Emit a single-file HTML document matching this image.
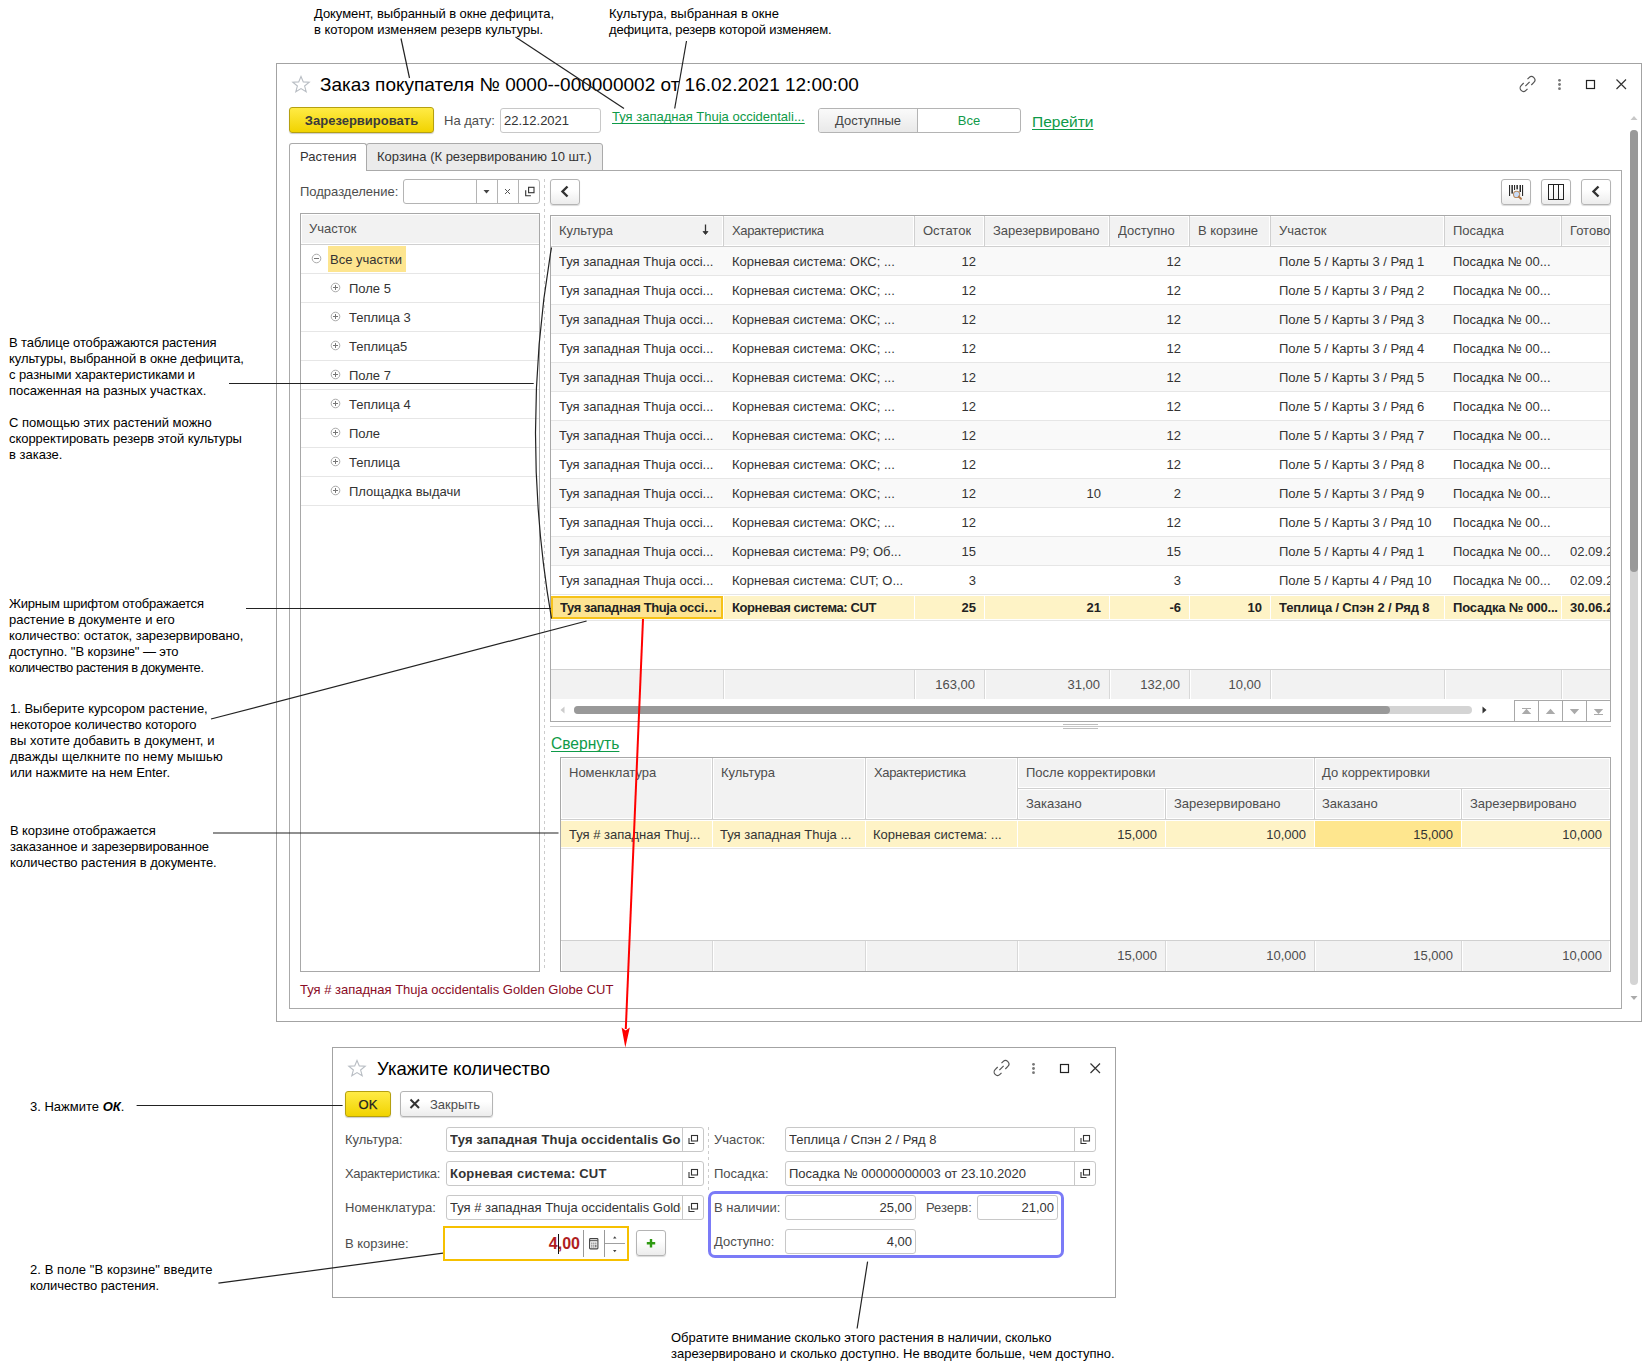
<!DOCTYPE html><html><head><meta charset="utf-8"><style>
html,body{margin:0;padding:0;}
body{width:1642px;height:1367px;position:relative;overflow:hidden;background:#fff;font-family:'Liberation Sans', sans-serif;}
div{box-sizing:border-box;}
.ann{position:absolute;font-size:13px;line-height:16px;color:#000;white-space:nowrap;}
.btn{position:absolute;border:1px solid #b4b4b4;border-radius:3px;background:linear-gradient(#fff 40%,#ececec);box-shadow:0 1px 1px rgba(0,0,0,.15);}
.ybtn{position:absolute;border:1px solid #b5a010;border-radius:3px;background:linear-gradient(#ffeb45,#f1d300);box-shadow:0 1px 1px rgba(0,0,0,.2);}
.fld{position:absolute;border:1px solid #c8c8c8;border-radius:3px;background:#fff;}
</style></head><body>
<div style="position:absolute;left:276px;top:63px;width:1366px;height:959px;border:1px solid #a3a3a3;background:#fff;"></div>
<svg style="position:absolute;left:291px;top:75px" width="20" height="18" viewBox="0 0 20 18"><path d="M10 1.5 L12.3 6.9 L18.2 7.2 L13.6 11 L15.2 16.7 L10 13.6 L4.8 16.7 L6.4 11 L1.8 7.2 L7.7 6.9 Z" fill="none" stroke="#b9bec4" stroke-width="1.1"/></svg>
<div style="position:absolute;left:320px;top:75px;line-height:20px;font-size:19px;color:#000;font-weight:normal;white-space:nowrap;text-align:left;">Заказ покупателя № 0000--000000002 от 16.02.2021 12:00:00</div>
<svg style="position:absolute;left:1515px;top:72px" width="120" height="24" viewBox="0 0 120 24">
<g fill="none" stroke="#555" stroke-width="1.2" transform="rotate(-45 12.5 12)">
<path d="M10.5 8.6 h-3.6 a3.4 3.4 0 0 0 0 6.8 h2.2"/>
<path d="M14.5 15.4 h3.6 a3.4 3.4 0 0 0 0 -6.8 h-2.2"/>
<path d="M9.5 12 h6"/>
</g>
<g fill="#777"><circle cx="44.5" cy="8.3" r="1.4"/><circle cx="44.5" cy="12.5" r="1.4"/><circle cx="44.5" cy="16.7" r="1.4"/></g>
<rect x="71.5" y="8.5" width="8" height="8" fill="none" stroke="#222" stroke-width="1.2"/>
<path d="M101.5 7.5 l9.5 9.5 M111 7.5 l-9.5 9.5" stroke="#333" stroke-width="1.2"/>
</svg>
<div class="ybtn" style="left:289px;top:107px;width:145px;height:26px;"></div>
<div style="position:absolute;left:289px;top:111px;width:145px;line-height:20px;font-size:13px;color:#3a3a3a;font-weight:bold;white-space:nowrap;text-align:center;">Зарезервировать</div>
<div style="position:absolute;left:444px;top:111px;line-height:20px;font-size:13px;color:#4d4d4d;font-weight:normal;white-space:nowrap;text-align:left;">На дату:</div>
<div class="fld" style="left:500px;top:108px;width:101px;height:25px;"></div>
<div style="position:absolute;left:504px;top:111px;line-height:20px;font-size:13px;color:#333;font-weight:normal;white-space:nowrap;text-align:left;">22.12.2021</div>
<div style="position:absolute;left:612px;top:107px;line-height:20px;font-size:13px;color:#0e9a48;font-weight:normal;white-space:nowrap;text-align:left;"><u style="text-decoration-thickness:1px;text-underline-offset:2px;text-decoration-skip-ink:none">Туя западная Thuja occidentali...</u></div>
<div style="position:absolute;left:818px;top:108px;width:203px;height:25px;border:1px solid #b4b4b4;border-radius:3px;background:#fff;overflow:hidden"><div style="position:absolute;left:0;top:0;width:99px;height:23px;background:linear-gradient(#fafafa,#e9e9e9);border-right:1px solid #b4b4b4"></div></div>
<div style="position:absolute;left:818px;top:111px;width:100px;line-height:20px;font-size:13px;color:#444;font-weight:normal;white-space:nowrap;text-align:center;">Доступные</div>
<div style="position:absolute;left:918px;top:111px;width:102px;line-height:20px;font-size:13px;color:#119a4a;font-weight:normal;white-space:nowrap;text-align:center;">Все</div>
<div style="position:absolute;left:1032px;top:112px;line-height:20px;font-size:15.5px;color:#0e9a48;font-weight:normal;white-space:nowrap;text-align:left;"><u style="text-decoration-thickness:1px;text-underline-offset:2px;text-decoration-skip-ink:none">Перейти</u></div>
<div style="position:absolute;left:366px;top:143px;width:237px;height:28px;border:1px solid #aaa;border-radius:3px 3px 0 0;background:#ebebeb"></div>
<div style="position:absolute;left:289px;top:170px;width:1333px;height:839px;border:1px solid #aaa;border-top:1px solid #aaa;"></div>
<div style="position:absolute;left:289px;top:143px;width:78px;height:28px;border:1px solid #aaa;border-bottom:none;border-radius:3px 3px 0 0;background:#fff"></div><div style="position:absolute;left:290px;top:170px;width:76px;height:1px;background:#fff"></div>
<div style="position:absolute;left:300px;top:147px;line-height:20px;font-size:13px;color:#333;font-weight:normal;white-space:nowrap;text-align:left;">Растения</div>
<div style="position:absolute;left:377px;top:147px;line-height:20px;font-size:13px;color:#333;font-weight:normal;white-space:nowrap;text-align:left;">Корзина (К резервированию 10 шт.)</div>
<div style="position:absolute;left:300px;top:182px;line-height:20px;font-size:13px;color:#4d4d4d;font-weight:normal;white-space:nowrap;text-align:left;">Подразделение:</div>
<div class="fld" style="left:403px;top:179px;width:137px;height:25px;border-color:#b4b4b4"></div>
<div style="position:absolute;left:476px;top:180px;width:1px;height:23px;background:#b4b4b4"></div>
<div style="position:absolute;left:497px;top:180px;width:1px;height:23px;background:#b4b4b4"></div>
<div style="position:absolute;left:518px;top:180px;width:1px;height:23px;background:#b4b4b4"></div>
<svg style="position:absolute;left:476px;top:180px" width="63" height="23" viewBox="0 0 63 23">
<path d="M7.5 10 h6 l-3 3.5z" fill="#444"/>
<path d="M29 9 l5 5 M34 9 l-5 5" stroke="#555" stroke-width="1"/>
<path d="M49.7 10.2 v5.6 h5.2" fill="none" stroke="#333" stroke-width="1.1"/>
<rect x="52.6" y="7.3" width="5.4" height="5.4" fill="none" stroke="#333" stroke-width="1.1"/>
</svg>
<div style="position:absolute;left:544px;top:179px;width:1px;height:792px;background:repeating-linear-gradient(#ccc 0 3px,transparent 3px 6px)"></div>
<div class="btn" style="left:550px;top:179px;width:30px;height:26px;"></div>
<svg style="position:absolute;left:558px;top:184px" width="14" height="16" viewBox="0 0 14 16"><path d="M9.5 2.5 L4.5 7.5 L9.5 12.5" fill="none" stroke="#333" stroke-width="2.4"/></svg>
<div class="btn" style="left:1501px;top:179px;width:30px;height:26px;"></div>
<div class="btn" style="left:1541px;top:179px;width:30px;height:26px;"></div>
<div class="btn" style="left:1581px;top:179px;width:30px;height:26px;"></div>
<svg style="position:absolute;left:1498px;top:176px" width="36" height="32" viewBox="0 0 36 32">
<g fill="#2a2a2a"><rect x="11" y="9" width="1.1" height="11"/><rect x="13.4" y="9" width="1.5" height="8.6"/><rect x="16" y="9" width="1.1" height="5"/>
<rect x="18.4" y="9" width="1.5" height="4.4"/><rect x="21.5" y="9" width="1.5" height="7"/><rect x="24" y="9" width="1.1" height="11"/></g>
<circle cx="18.6" cy="18.4" r="3.1" fill="#c9dcf7" stroke="#b98c62" stroke-width="1.1"/>
<path d="M20.8 20.6 L23 22.8" stroke="#b07a4e" stroke-width="2" stroke-linecap="round"/>
</svg>
<svg style="position:absolute;left:1541px;top:179px" width="30" height="26" viewBox="0 0 30 26">
<rect x="7.5" y="5.5" width="15" height="15" fill="none" stroke="#222" stroke-width="1"/>
<path d="M12.5 5.5 v15 M17.5 5.5 v15" stroke="#222" stroke-width="1"/>
</svg>
<svg style="position:absolute;left:1589px;top:184px" width="14" height="16" viewBox="0 0 14 16"><path d="M9.5 2.5 L4.5 7.5 L9.5 12.5" fill="none" stroke="#333" stroke-width="2.4"/></svg>
<div style="position:absolute;left:300px;top:213px;width:240px;height:759px;border:1px solid #a8a8a8;background:#fff"></div>
<div style="position:absolute;left:301px;top:214px;width:238px;height:30px;background:#f2f2f2;border:1px solid #fff;border-right:none"></div>
<div style="position:absolute;left:301px;top:244px;width:238px;height:1px;background:#d0d0d0"></div>
<div style="position:absolute;left:309px;top:219px;line-height:20px;font-size:13px;color:#4d4d4d;font-weight:normal;white-space:nowrap;text-align:left;">Участок</div>
<div style="position:absolute;left:301px;top:273px;width:238px;height:1px;background:#e6e6e6"></div>
<div style="position:absolute;left:328px;top:246px;width:78px;height:26px;background:#fde58f"></div>
<svg style="position:absolute;left:311px;top:253px" width="12" height="12" viewBox="0 0 12 12"><circle cx="5.5" cy="5.5" r="4.3" fill="none" stroke="#aaa" stroke-width="1"/><path d="M3 5.5 h5" stroke="#777" stroke-width="1"/></svg>
<div style="position:absolute;left:330px;top:250px;line-height:20px;font-size:13px;color:#333;font-weight:normal;white-space:nowrap;text-align:left;">Все участки</div>
<div style="position:absolute;left:301px;top:302px;width:238px;height:1px;background:#e6e6e6"></div>
<svg style="position:absolute;left:330px;top:282px" width="12" height="12" viewBox="0 0 12 12"><circle cx="5.5" cy="5.5" r="4.3" fill="none" stroke="#aaa" stroke-width="1"/><path d="M3 5.5 h5 M5.5 3 v5" stroke="#777" stroke-width="1"/></svg>
<div style="position:absolute;left:349px;top:279px;line-height:20px;font-size:13px;color:#333;font-weight:normal;white-space:nowrap;text-align:left;">Поле 5</div>
<div style="position:absolute;left:301px;top:331px;width:238px;height:1px;background:#e6e6e6"></div>
<svg style="position:absolute;left:330px;top:311px" width="12" height="12" viewBox="0 0 12 12"><circle cx="5.5" cy="5.5" r="4.3" fill="none" stroke="#aaa" stroke-width="1"/><path d="M3 5.5 h5 M5.5 3 v5" stroke="#777" stroke-width="1"/></svg>
<div style="position:absolute;left:349px;top:308px;line-height:20px;font-size:13px;color:#333;font-weight:normal;white-space:nowrap;text-align:left;">Теплица 3</div>
<div style="position:absolute;left:301px;top:360px;width:238px;height:1px;background:#e6e6e6"></div>
<svg style="position:absolute;left:330px;top:340px" width="12" height="12" viewBox="0 0 12 12"><circle cx="5.5" cy="5.5" r="4.3" fill="none" stroke="#aaa" stroke-width="1"/><path d="M3 5.5 h5 M5.5 3 v5" stroke="#777" stroke-width="1"/></svg>
<div style="position:absolute;left:349px;top:337px;line-height:20px;font-size:13px;color:#333;font-weight:normal;white-space:nowrap;text-align:left;">Теплица5</div>
<div style="position:absolute;left:301px;top:389px;width:238px;height:1px;background:#e6e6e6"></div>
<svg style="position:absolute;left:330px;top:369px" width="12" height="12" viewBox="0 0 12 12"><circle cx="5.5" cy="5.5" r="4.3" fill="none" stroke="#aaa" stroke-width="1"/><path d="M3 5.5 h5 M5.5 3 v5" stroke="#777" stroke-width="1"/></svg>
<div style="position:absolute;left:349px;top:366px;line-height:20px;font-size:13px;color:#333;font-weight:normal;white-space:nowrap;text-align:left;">Поле 7</div>
<div style="position:absolute;left:301px;top:418px;width:238px;height:1px;background:#e6e6e6"></div>
<svg style="position:absolute;left:330px;top:398px" width="12" height="12" viewBox="0 0 12 12"><circle cx="5.5" cy="5.5" r="4.3" fill="none" stroke="#aaa" stroke-width="1"/><path d="M3 5.5 h5 M5.5 3 v5" stroke="#777" stroke-width="1"/></svg>
<div style="position:absolute;left:349px;top:395px;line-height:20px;font-size:13px;color:#333;font-weight:normal;white-space:nowrap;text-align:left;">Теплица 4</div>
<div style="position:absolute;left:301px;top:447px;width:238px;height:1px;background:#e6e6e6"></div>
<svg style="position:absolute;left:330px;top:427px" width="12" height="12" viewBox="0 0 12 12"><circle cx="5.5" cy="5.5" r="4.3" fill="none" stroke="#aaa" stroke-width="1"/><path d="M3 5.5 h5 M5.5 3 v5" stroke="#777" stroke-width="1"/></svg>
<div style="position:absolute;left:349px;top:424px;line-height:20px;font-size:13px;color:#333;font-weight:normal;white-space:nowrap;text-align:left;">Поле</div>
<div style="position:absolute;left:301px;top:476px;width:238px;height:1px;background:#e6e6e6"></div>
<svg style="position:absolute;left:330px;top:456px" width="12" height="12" viewBox="0 0 12 12"><circle cx="5.5" cy="5.5" r="4.3" fill="none" stroke="#aaa" stroke-width="1"/><path d="M3 5.5 h5 M5.5 3 v5" stroke="#777" stroke-width="1"/></svg>
<div style="position:absolute;left:349px;top:453px;line-height:20px;font-size:13px;color:#333;font-weight:normal;white-space:nowrap;text-align:left;">Теплица</div>
<div style="position:absolute;left:301px;top:505px;width:238px;height:1px;background:#e6e6e6"></div>
<svg style="position:absolute;left:330px;top:485px" width="12" height="12" viewBox="0 0 12 12"><circle cx="5.5" cy="5.5" r="4.3" fill="none" stroke="#aaa" stroke-width="1"/><path d="M3 5.5 h5 M5.5 3 v5" stroke="#777" stroke-width="1"/></svg>
<div style="position:absolute;left:349px;top:482px;line-height:20px;font-size:13px;color:#333;font-weight:normal;white-space:nowrap;text-align:left;">Площадка выдачи</div>
<div style="position:absolute;left:550px;top:215px;width:1061px;height:507px;border:1px solid #a8a8a8;background:#fff;overflow:hidden"></div>
<div style="position:absolute;left:551px;top:216px;width:1059px;height:30px;background:#f2f2f2"></div>
<div style="position:absolute;left:551px;top:246px;width:1059px;height:1px;background:#cfcfcf"></div>
<div style="position:absolute;left:551px;top:216px;width:172px;height:30px;border:1px solid #fff"></div>
<div style="position:absolute;left:559px;top:221px;line-height:20px;font-size:13px;color:#4d4d4d;font-weight:normal;white-space:nowrap;text-align:left;overflow:hidden">Культура</div>
<div style="position:absolute;left:723px;top:216px;width:191px;height:30px;border:1px solid #fff"></div>
<div style="position:absolute;left:723px;top:216px;width:1px;height:30px;background:#d0d0d0"></div>
<div style="position:absolute;left:732px;top:221px;line-height:20px;font-size:13px;color:#4d4d4d;font-weight:normal;white-space:nowrap;text-align:left;overflow:hidden"><span style="letter-spacing:-0.35px">Характеристика</span></div>
<div style="position:absolute;left:914px;top:216px;width:70px;height:30px;border:1px solid #fff"></div>
<div style="position:absolute;left:914px;top:216px;width:1px;height:30px;background:#d0d0d0"></div>
<div style="position:absolute;left:923px;top:221px;line-height:20px;font-size:13px;color:#4d4d4d;font-weight:normal;white-space:nowrap;text-align:left;overflow:hidden">Остаток</div>
<div style="position:absolute;left:984px;top:216px;width:125px;height:30px;border:1px solid #fff"></div>
<div style="position:absolute;left:984px;top:216px;width:1px;height:30px;background:#d0d0d0"></div>
<div style="position:absolute;left:993px;top:221px;line-height:20px;font-size:13px;color:#4d4d4d;font-weight:normal;white-space:nowrap;text-align:left;overflow:hidden">Зарезервировано</div>
<div style="position:absolute;left:1109px;top:216px;width:80px;height:30px;border:1px solid #fff"></div>
<div style="position:absolute;left:1109px;top:216px;width:1px;height:30px;background:#d0d0d0"></div>
<div style="position:absolute;left:1118px;top:221px;line-height:20px;font-size:13px;color:#4d4d4d;font-weight:normal;white-space:nowrap;text-align:left;overflow:hidden">Доступно</div>
<div style="position:absolute;left:1189px;top:216px;width:81px;height:30px;border:1px solid #fff"></div>
<div style="position:absolute;left:1189px;top:216px;width:1px;height:30px;background:#d0d0d0"></div>
<div style="position:absolute;left:1198px;top:221px;line-height:20px;font-size:13px;color:#4d4d4d;font-weight:normal;white-space:nowrap;text-align:left;overflow:hidden">В корзине</div>
<div style="position:absolute;left:1270px;top:216px;width:174px;height:30px;border:1px solid #fff"></div>
<div style="position:absolute;left:1270px;top:216px;width:1px;height:30px;background:#d0d0d0"></div>
<div style="position:absolute;left:1279px;top:221px;line-height:20px;font-size:13px;color:#4d4d4d;font-weight:normal;white-space:nowrap;text-align:left;overflow:hidden">Участок</div>
<div style="position:absolute;left:1444px;top:216px;width:117px;height:30px;border:1px solid #fff"></div>
<div style="position:absolute;left:1444px;top:216px;width:1px;height:30px;background:#d0d0d0"></div>
<div style="position:absolute;left:1453px;top:221px;line-height:20px;font-size:13px;color:#4d4d4d;font-weight:normal;white-space:nowrap;text-align:left;overflow:hidden">Посадка</div>
<div style="position:absolute;left:1561px;top:216px;width:49px;height:30px;border:1px solid #fff"></div>
<div style="position:absolute;left:1561px;top:216px;width:1px;height:30px;background:#d0d0d0"></div>
<div style="position:absolute;left:1570px;top:221px;line-height:20px;font-size:13px;color:#4d4d4d;font-weight:normal;white-space:nowrap;text-align:left;overflow:hidden">Готово</div>
<svg style="position:absolute;left:701px;top:224px" width="10" height="12" viewBox="0 0 10 12"><path d="M4.5 0.5 v9.5" stroke="#333" stroke-width="1.3"/><path d="M2 7.5 l2.5 3 l2.5 -3z" fill="#333" stroke="#333" stroke-width="0.8"/></svg>
<div style="position:absolute;left:551px;top:247px;width:1059px;height:28px;background:#f9f9f9"></div>
<div style="position:absolute;left:551px;top:275px;width:1059px;height:1px;background:#e6e6e6"></div>
<div style="position:absolute;left:559px;top:252px;line-height:20px;font-size:13px;color:#333;font-weight:normal;white-space:nowrap;text-align:left;width:163px;overflow:hidden">Туя западная Thuja occi...</div>
<div style="position:absolute;left:732px;top:252px;line-height:20px;font-size:13px;color:#333;font-weight:normal;white-space:nowrap;text-align:left;width:182px;overflow:hidden">Корневая система: ОКС; ...</div>
<div style="position:absolute;left:914px;top:252px;width:62px;line-height:20px;font-size:13px;color:#333;font-weight:normal;white-space:nowrap;text-align:right;">12</div>
<div style="position:absolute;left:1109px;top:252px;width:72px;line-height:20px;font-size:13px;color:#333;font-weight:normal;white-space:nowrap;text-align:right;">12</div>
<div style="position:absolute;left:1279px;top:252px;line-height:20px;font-size:13px;color:#333;font-weight:normal;white-space:nowrap;text-align:left;width:165px;overflow:hidden">Поле 5 / Карты 3 / Ряд 1</div>
<div style="position:absolute;left:1453px;top:252px;line-height:20px;font-size:13px;color:#333;font-weight:normal;white-space:nowrap;text-align:left;width:108px;overflow:hidden">Посадка № 00...</div>
<div style="position:absolute;left:551px;top:276px;width:1059px;height:28px;background:#fff"></div>
<div style="position:absolute;left:551px;top:304px;width:1059px;height:1px;background:#e6e6e6"></div>
<div style="position:absolute;left:559px;top:281px;line-height:20px;font-size:13px;color:#333;font-weight:normal;white-space:nowrap;text-align:left;width:163px;overflow:hidden">Туя западная Thuja occi...</div>
<div style="position:absolute;left:732px;top:281px;line-height:20px;font-size:13px;color:#333;font-weight:normal;white-space:nowrap;text-align:left;width:182px;overflow:hidden">Корневая система: ОКС; ...</div>
<div style="position:absolute;left:914px;top:281px;width:62px;line-height:20px;font-size:13px;color:#333;font-weight:normal;white-space:nowrap;text-align:right;">12</div>
<div style="position:absolute;left:1109px;top:281px;width:72px;line-height:20px;font-size:13px;color:#333;font-weight:normal;white-space:nowrap;text-align:right;">12</div>
<div style="position:absolute;left:1279px;top:281px;line-height:20px;font-size:13px;color:#333;font-weight:normal;white-space:nowrap;text-align:left;width:165px;overflow:hidden">Поле 5 / Карты 3 / Ряд 2</div>
<div style="position:absolute;left:1453px;top:281px;line-height:20px;font-size:13px;color:#333;font-weight:normal;white-space:nowrap;text-align:left;width:108px;overflow:hidden">Посадка № 00...</div>
<div style="position:absolute;left:551px;top:305px;width:1059px;height:28px;background:#f9f9f9"></div>
<div style="position:absolute;left:551px;top:333px;width:1059px;height:1px;background:#e6e6e6"></div>
<div style="position:absolute;left:559px;top:310px;line-height:20px;font-size:13px;color:#333;font-weight:normal;white-space:nowrap;text-align:left;width:163px;overflow:hidden">Туя западная Thuja occi...</div>
<div style="position:absolute;left:732px;top:310px;line-height:20px;font-size:13px;color:#333;font-weight:normal;white-space:nowrap;text-align:left;width:182px;overflow:hidden">Корневая система: ОКС; ...</div>
<div style="position:absolute;left:914px;top:310px;width:62px;line-height:20px;font-size:13px;color:#333;font-weight:normal;white-space:nowrap;text-align:right;">12</div>
<div style="position:absolute;left:1109px;top:310px;width:72px;line-height:20px;font-size:13px;color:#333;font-weight:normal;white-space:nowrap;text-align:right;">12</div>
<div style="position:absolute;left:1279px;top:310px;line-height:20px;font-size:13px;color:#333;font-weight:normal;white-space:nowrap;text-align:left;width:165px;overflow:hidden">Поле 5 / Карты 3 / Ряд 3</div>
<div style="position:absolute;left:1453px;top:310px;line-height:20px;font-size:13px;color:#333;font-weight:normal;white-space:nowrap;text-align:left;width:108px;overflow:hidden">Посадка № 00...</div>
<div style="position:absolute;left:551px;top:334px;width:1059px;height:28px;background:#fff"></div>
<div style="position:absolute;left:551px;top:362px;width:1059px;height:1px;background:#e6e6e6"></div>
<div style="position:absolute;left:559px;top:339px;line-height:20px;font-size:13px;color:#333;font-weight:normal;white-space:nowrap;text-align:left;width:163px;overflow:hidden">Туя западная Thuja occi...</div>
<div style="position:absolute;left:732px;top:339px;line-height:20px;font-size:13px;color:#333;font-weight:normal;white-space:nowrap;text-align:left;width:182px;overflow:hidden">Корневая система: ОКС; ...</div>
<div style="position:absolute;left:914px;top:339px;width:62px;line-height:20px;font-size:13px;color:#333;font-weight:normal;white-space:nowrap;text-align:right;">12</div>
<div style="position:absolute;left:1109px;top:339px;width:72px;line-height:20px;font-size:13px;color:#333;font-weight:normal;white-space:nowrap;text-align:right;">12</div>
<div style="position:absolute;left:1279px;top:339px;line-height:20px;font-size:13px;color:#333;font-weight:normal;white-space:nowrap;text-align:left;width:165px;overflow:hidden">Поле 5 / Карты 3 / Ряд 4</div>
<div style="position:absolute;left:1453px;top:339px;line-height:20px;font-size:13px;color:#333;font-weight:normal;white-space:nowrap;text-align:left;width:108px;overflow:hidden">Посадка № 00...</div>
<div style="position:absolute;left:551px;top:363px;width:1059px;height:28px;background:#f9f9f9"></div>
<div style="position:absolute;left:551px;top:391px;width:1059px;height:1px;background:#e6e6e6"></div>
<div style="position:absolute;left:559px;top:368px;line-height:20px;font-size:13px;color:#333;font-weight:normal;white-space:nowrap;text-align:left;width:163px;overflow:hidden">Туя западная Thuja occi...</div>
<div style="position:absolute;left:732px;top:368px;line-height:20px;font-size:13px;color:#333;font-weight:normal;white-space:nowrap;text-align:left;width:182px;overflow:hidden">Корневая система: ОКС; ...</div>
<div style="position:absolute;left:914px;top:368px;width:62px;line-height:20px;font-size:13px;color:#333;font-weight:normal;white-space:nowrap;text-align:right;">12</div>
<div style="position:absolute;left:1109px;top:368px;width:72px;line-height:20px;font-size:13px;color:#333;font-weight:normal;white-space:nowrap;text-align:right;">12</div>
<div style="position:absolute;left:1279px;top:368px;line-height:20px;font-size:13px;color:#333;font-weight:normal;white-space:nowrap;text-align:left;width:165px;overflow:hidden">Поле 5 / Карты 3 / Ряд 5</div>
<div style="position:absolute;left:1453px;top:368px;line-height:20px;font-size:13px;color:#333;font-weight:normal;white-space:nowrap;text-align:left;width:108px;overflow:hidden">Посадка № 00...</div>
<div style="position:absolute;left:551px;top:392px;width:1059px;height:28px;background:#fff"></div>
<div style="position:absolute;left:551px;top:420px;width:1059px;height:1px;background:#e6e6e6"></div>
<div style="position:absolute;left:559px;top:397px;line-height:20px;font-size:13px;color:#333;font-weight:normal;white-space:nowrap;text-align:left;width:163px;overflow:hidden">Туя западная Thuja occi...</div>
<div style="position:absolute;left:732px;top:397px;line-height:20px;font-size:13px;color:#333;font-weight:normal;white-space:nowrap;text-align:left;width:182px;overflow:hidden">Корневая система: ОКС; ...</div>
<div style="position:absolute;left:914px;top:397px;width:62px;line-height:20px;font-size:13px;color:#333;font-weight:normal;white-space:nowrap;text-align:right;">12</div>
<div style="position:absolute;left:1109px;top:397px;width:72px;line-height:20px;font-size:13px;color:#333;font-weight:normal;white-space:nowrap;text-align:right;">12</div>
<div style="position:absolute;left:1279px;top:397px;line-height:20px;font-size:13px;color:#333;font-weight:normal;white-space:nowrap;text-align:left;width:165px;overflow:hidden">Поле 5 / Карты 3 / Ряд 6</div>
<div style="position:absolute;left:1453px;top:397px;line-height:20px;font-size:13px;color:#333;font-weight:normal;white-space:nowrap;text-align:left;width:108px;overflow:hidden">Посадка № 00...</div>
<div style="position:absolute;left:551px;top:421px;width:1059px;height:28px;background:#f9f9f9"></div>
<div style="position:absolute;left:551px;top:449px;width:1059px;height:1px;background:#e6e6e6"></div>
<div style="position:absolute;left:559px;top:426px;line-height:20px;font-size:13px;color:#333;font-weight:normal;white-space:nowrap;text-align:left;width:163px;overflow:hidden">Туя западная Thuja occi...</div>
<div style="position:absolute;left:732px;top:426px;line-height:20px;font-size:13px;color:#333;font-weight:normal;white-space:nowrap;text-align:left;width:182px;overflow:hidden">Корневая система: ОКС; ...</div>
<div style="position:absolute;left:914px;top:426px;width:62px;line-height:20px;font-size:13px;color:#333;font-weight:normal;white-space:nowrap;text-align:right;">12</div>
<div style="position:absolute;left:1109px;top:426px;width:72px;line-height:20px;font-size:13px;color:#333;font-weight:normal;white-space:nowrap;text-align:right;">12</div>
<div style="position:absolute;left:1279px;top:426px;line-height:20px;font-size:13px;color:#333;font-weight:normal;white-space:nowrap;text-align:left;width:165px;overflow:hidden">Поле 5 / Карты 3 / Ряд 7</div>
<div style="position:absolute;left:1453px;top:426px;line-height:20px;font-size:13px;color:#333;font-weight:normal;white-space:nowrap;text-align:left;width:108px;overflow:hidden">Посадка № 00...</div>
<div style="position:absolute;left:551px;top:450px;width:1059px;height:28px;background:#fff"></div>
<div style="position:absolute;left:551px;top:478px;width:1059px;height:1px;background:#e6e6e6"></div>
<div style="position:absolute;left:559px;top:455px;line-height:20px;font-size:13px;color:#333;font-weight:normal;white-space:nowrap;text-align:left;width:163px;overflow:hidden">Туя западная Thuja occi...</div>
<div style="position:absolute;left:732px;top:455px;line-height:20px;font-size:13px;color:#333;font-weight:normal;white-space:nowrap;text-align:left;width:182px;overflow:hidden">Корневая система: ОКС; ...</div>
<div style="position:absolute;left:914px;top:455px;width:62px;line-height:20px;font-size:13px;color:#333;font-weight:normal;white-space:nowrap;text-align:right;">12</div>
<div style="position:absolute;left:1109px;top:455px;width:72px;line-height:20px;font-size:13px;color:#333;font-weight:normal;white-space:nowrap;text-align:right;">12</div>
<div style="position:absolute;left:1279px;top:455px;line-height:20px;font-size:13px;color:#333;font-weight:normal;white-space:nowrap;text-align:left;width:165px;overflow:hidden">Поле 5 / Карты 3 / Ряд 8</div>
<div style="position:absolute;left:1453px;top:455px;line-height:20px;font-size:13px;color:#333;font-weight:normal;white-space:nowrap;text-align:left;width:108px;overflow:hidden">Посадка № 00...</div>
<div style="position:absolute;left:551px;top:479px;width:1059px;height:28px;background:#f9f9f9"></div>
<div style="position:absolute;left:551px;top:507px;width:1059px;height:1px;background:#e6e6e6"></div>
<div style="position:absolute;left:559px;top:484px;line-height:20px;font-size:13px;color:#333;font-weight:normal;white-space:nowrap;text-align:left;width:163px;overflow:hidden">Туя западная Thuja occi...</div>
<div style="position:absolute;left:732px;top:484px;line-height:20px;font-size:13px;color:#333;font-weight:normal;white-space:nowrap;text-align:left;width:182px;overflow:hidden">Корневая система: ОКС; ...</div>
<div style="position:absolute;left:914px;top:484px;width:62px;line-height:20px;font-size:13px;color:#333;font-weight:normal;white-space:nowrap;text-align:right;">12</div>
<div style="position:absolute;left:984px;top:484px;width:117px;line-height:20px;font-size:13px;color:#333;font-weight:normal;white-space:nowrap;text-align:right;">10</div>
<div style="position:absolute;left:1109px;top:484px;width:72px;line-height:20px;font-size:13px;color:#333;font-weight:normal;white-space:nowrap;text-align:right;">2</div>
<div style="position:absolute;left:1279px;top:484px;line-height:20px;font-size:13px;color:#333;font-weight:normal;white-space:nowrap;text-align:left;width:165px;overflow:hidden">Поле 5 / Карты 3 / Ряд 9</div>
<div style="position:absolute;left:1453px;top:484px;line-height:20px;font-size:13px;color:#333;font-weight:normal;white-space:nowrap;text-align:left;width:108px;overflow:hidden">Посадка № 00...</div>
<div style="position:absolute;left:551px;top:508px;width:1059px;height:28px;background:#fff"></div>
<div style="position:absolute;left:551px;top:536px;width:1059px;height:1px;background:#e6e6e6"></div>
<div style="position:absolute;left:559px;top:513px;line-height:20px;font-size:13px;color:#333;font-weight:normal;white-space:nowrap;text-align:left;width:163px;overflow:hidden">Туя западная Thuja occi...</div>
<div style="position:absolute;left:732px;top:513px;line-height:20px;font-size:13px;color:#333;font-weight:normal;white-space:nowrap;text-align:left;width:182px;overflow:hidden">Корневая система: ОКС; ...</div>
<div style="position:absolute;left:914px;top:513px;width:62px;line-height:20px;font-size:13px;color:#333;font-weight:normal;white-space:nowrap;text-align:right;">12</div>
<div style="position:absolute;left:1109px;top:513px;width:72px;line-height:20px;font-size:13px;color:#333;font-weight:normal;white-space:nowrap;text-align:right;">12</div>
<div style="position:absolute;left:1279px;top:513px;line-height:20px;font-size:13px;color:#333;font-weight:normal;white-space:nowrap;text-align:left;width:165px;overflow:hidden">Поле 5 / Карты 3 / Ряд 10</div>
<div style="position:absolute;left:1453px;top:513px;line-height:20px;font-size:13px;color:#333;font-weight:normal;white-space:nowrap;text-align:left;width:108px;overflow:hidden">Посадка № 00...</div>
<div style="position:absolute;left:551px;top:537px;width:1059px;height:28px;background:#f9f9f9"></div>
<div style="position:absolute;left:551px;top:565px;width:1059px;height:1px;background:#e6e6e6"></div>
<div style="position:absolute;left:559px;top:542px;line-height:20px;font-size:13px;color:#333;font-weight:normal;white-space:nowrap;text-align:left;width:163px;overflow:hidden">Туя западная Thuja occi...</div>
<div style="position:absolute;left:732px;top:542px;line-height:20px;font-size:13px;color:#333;font-weight:normal;white-space:nowrap;text-align:left;width:182px;overflow:hidden">Корневая система: Р9; Об...</div>
<div style="position:absolute;left:914px;top:542px;width:62px;line-height:20px;font-size:13px;color:#333;font-weight:normal;white-space:nowrap;text-align:right;">15</div>
<div style="position:absolute;left:1109px;top:542px;width:72px;line-height:20px;font-size:13px;color:#333;font-weight:normal;white-space:nowrap;text-align:right;">15</div>
<div style="position:absolute;left:1279px;top:542px;line-height:20px;font-size:13px;color:#333;font-weight:normal;white-space:nowrap;text-align:left;width:165px;overflow:hidden">Поле 5 / Карты 4 / Ряд 1</div>
<div style="position:absolute;left:1453px;top:542px;line-height:20px;font-size:13px;color:#333;font-weight:normal;white-space:nowrap;text-align:left;width:108px;overflow:hidden">Посадка № 00...</div>
<div style="position:absolute;left:1570px;top:542px;line-height:20px;font-size:13px;color:#333;font-weight:normal;white-space:nowrap;text-align:left;width:40px;overflow:hidden">02.09.2</div>
<div style="position:absolute;left:551px;top:566px;width:1059px;height:28px;background:#fff"></div>
<div style="position:absolute;left:551px;top:594px;width:1059px;height:1px;background:#e6e6e6"></div>
<div style="position:absolute;left:559px;top:571px;line-height:20px;font-size:13px;color:#333;font-weight:normal;white-space:nowrap;text-align:left;width:163px;overflow:hidden">Туя западная Thuja occi...</div>
<div style="position:absolute;left:732px;top:571px;line-height:20px;font-size:13px;color:#333;font-weight:normal;white-space:nowrap;text-align:left;width:182px;overflow:hidden">Корневая система: CUT; О...</div>
<div style="position:absolute;left:914px;top:571px;width:62px;line-height:20px;font-size:13px;color:#333;font-weight:normal;white-space:nowrap;text-align:right;">3</div>
<div style="position:absolute;left:1109px;top:571px;width:72px;line-height:20px;font-size:13px;color:#333;font-weight:normal;white-space:nowrap;text-align:right;">3</div>
<div style="position:absolute;left:1279px;top:571px;line-height:20px;font-size:13px;color:#333;font-weight:normal;white-space:nowrap;text-align:left;width:165px;overflow:hidden">Поле 5 / Карты 4 / Ряд 10</div>
<div style="position:absolute;left:1453px;top:571px;line-height:20px;font-size:13px;color:#333;font-weight:normal;white-space:nowrap;text-align:left;width:108px;overflow:hidden">Посадка № 00...</div>
<div style="position:absolute;left:1570px;top:571px;line-height:20px;font-size:13px;color:#333;font-weight:normal;white-space:nowrap;text-align:left;width:40px;overflow:hidden">02.09.2</div>
<div style="position:absolute;left:551px;top:596px;width:1059px;height:23px;background:#fef3c6"></div>
<div style="position:absolute;left:551px;top:620px;width:1059px;height:1px;background:#e6e6e6"></div>
<div style="position:absolute;left:551px;top:596px;width:172px;height:23px;background:#fde492;border:2px solid #f6c218"></div>
<div style="position:absolute;left:723px;top:595px;width:1px;height:25px;background:#fff"></div>
<div style="position:absolute;left:914px;top:595px;width:1px;height:25px;background:#fff"></div>
<div style="position:absolute;left:984px;top:595px;width:1px;height:25px;background:#fff"></div>
<div style="position:absolute;left:1109px;top:595px;width:1px;height:25px;background:#fff"></div>
<div style="position:absolute;left:1189px;top:595px;width:1px;height:25px;background:#fff"></div>
<div style="position:absolute;left:1270px;top:595px;width:1px;height:25px;background:#fff"></div>
<div style="position:absolute;left:1444px;top:595px;width:1px;height:25px;background:#fff"></div>
<div style="position:absolute;left:1561px;top:595px;width:1px;height:25px;background:#fff"></div>
<div style="position:absolute;left:560px;top:598px;line-height:20px;font-size:13px;color:#222;font-weight:bold;white-space:nowrap;text-align:left;width:163px;overflow:hidden;letter-spacing:-0.4px">Туя западная Thuja occi…</div>
<div style="position:absolute;left:732px;top:598px;line-height:20px;font-size:13px;color:#222;font-weight:bold;white-space:nowrap;text-align:left;width:182px;overflow:hidden;letter-spacing:-0.4px">Корневая система: CUT</div>
<div style="position:absolute;left:914px;top:598px;width:62px;line-height:20px;font-size:13px;color:#222;font-weight:bold;white-space:nowrap;text-align:right;">25</div>
<div style="position:absolute;left:984px;top:598px;width:117px;line-height:20px;font-size:13px;color:#222;font-weight:bold;white-space:nowrap;text-align:right;">21</div>
<div style="position:absolute;left:1109px;top:598px;width:72px;line-height:20px;font-size:13px;color:#222;font-weight:bold;white-space:nowrap;text-align:right;">-6</div>
<div style="position:absolute;left:1189px;top:598px;width:73px;line-height:20px;font-size:13px;color:#222;font-weight:bold;white-space:nowrap;text-align:right;">10</div>
<div style="position:absolute;left:1279px;top:598px;line-height:20px;font-size:13px;color:#222;font-weight:bold;white-space:nowrap;text-align:left;width:165px;overflow:hidden;letter-spacing:-0.15px">Теплица / Спэн 2 / Ряд 8</div>
<div style="position:absolute;left:1453px;top:598px;line-height:20px;font-size:13px;color:#222;font-weight:bold;white-space:nowrap;text-align:left;width:108px;overflow:hidden;letter-spacing:-0.2px">Посадка № 000...</div>
<div style="position:absolute;left:1570px;top:598px;line-height:20px;font-size:13px;color:#222;font-weight:bold;white-space:nowrap;text-align:left;width:40px;overflow:hidden;letter-spacing:0px">30.06.2</div>
<div style="position:absolute;left:551px;top:669px;width:1059px;height:1px;background:#d0d0d0"></div>
<div style="position:absolute;left:551px;top:670px;width:1059px;height:29px;background:#f2f2f2"></div>
<div style="position:absolute;left:723px;top:670px;width:1px;height:29px;background:#d8d8d8"></div>
<div style="position:absolute;left:724px;top:670px;width:1px;height:29px;background:#fff"></div>
<div style="position:absolute;left:914px;top:670px;width:1px;height:29px;background:#d8d8d8"></div>
<div style="position:absolute;left:915px;top:670px;width:1px;height:29px;background:#fff"></div>
<div style="position:absolute;left:984px;top:670px;width:1px;height:29px;background:#d8d8d8"></div>
<div style="position:absolute;left:985px;top:670px;width:1px;height:29px;background:#fff"></div>
<div style="position:absolute;left:1109px;top:670px;width:1px;height:29px;background:#d8d8d8"></div>
<div style="position:absolute;left:1110px;top:670px;width:1px;height:29px;background:#fff"></div>
<div style="position:absolute;left:1189px;top:670px;width:1px;height:29px;background:#d8d8d8"></div>
<div style="position:absolute;left:1190px;top:670px;width:1px;height:29px;background:#fff"></div>
<div style="position:absolute;left:1270px;top:670px;width:1px;height:29px;background:#d8d8d8"></div>
<div style="position:absolute;left:1271px;top:670px;width:1px;height:29px;background:#fff"></div>
<div style="position:absolute;left:1444px;top:670px;width:1px;height:29px;background:#d8d8d8"></div>
<div style="position:absolute;left:1445px;top:670px;width:1px;height:29px;background:#fff"></div>
<div style="position:absolute;left:1561px;top:670px;width:1px;height:29px;background:#d8d8d8"></div>
<div style="position:absolute;left:1562px;top:670px;width:1px;height:29px;background:#fff"></div>
<div style="position:absolute;left:914px;top:675px;width:61px;line-height:20px;font-size:13px;color:#4d4d4d;font-weight:normal;white-space:nowrap;text-align:right;">163,00</div>
<div style="position:absolute;left:984px;top:675px;width:116px;line-height:20px;font-size:13px;color:#4d4d4d;font-weight:normal;white-space:nowrap;text-align:right;">31,00</div>
<div style="position:absolute;left:1109px;top:675px;width:71px;line-height:20px;font-size:13px;color:#4d4d4d;font-weight:normal;white-space:nowrap;text-align:right;">132,00</div>
<div style="position:absolute;left:1189px;top:675px;width:72px;line-height:20px;font-size:13px;color:#4d4d4d;font-weight:normal;white-space:nowrap;text-align:right;">10,00</div>
<svg style="position:absolute;left:558px;top:704px" width="940" height="12" viewBox="0 0 940 12"><path d="M2.5 6 l4 -3.5 v7z" fill="#ccc"/><rect x="16" y="2" width="898" height="8" rx="4" fill="#d4d4d4"/><rect x="16" y="2" width="816" height="8" rx="4" fill="#999"/><path d="M924.5 2.5 l4 3.5 l-4 3.5z" fill="#333"/></svg>
<div style="position:absolute;left:1514px;top:700px;width:97px;height:22px;border:1px solid #a8a8a8;background:#fff"></div>
<div style="position:absolute;left:1538px;top:701px;width:1px;height:20px;background:#a8a8a8"></div>
<div style="position:absolute;left:1562px;top:701px;width:1px;height:20px;background:#a8a8a8"></div>
<div style="position:absolute;left:1586px;top:701px;width:1px;height:20px;background:#a8a8a8"></div>
<svg style="position:absolute;left:1510px;top:695px" width="105" height="30" viewBox="0 0 105 30">
<g fill="#aaa">
<rect x="12" y="13" width="9" height="1"/><path d="M16.5 13.8 L21.2 19 L11.8 19Z"/>
<path d="M40.5 13.8 L45.2 19 L35.8 19Z"/>
<path d="M59.8 14 L69.2 14 L64.5 19.2Z"/>
<path d="M83.8 14 L93.2 14 L88.5 19Z"/><rect x="84" y="19" width="9" height="1"/>
</g></svg>
<div style="position:absolute;left:550px;top:726px;width:1061px;height:1px;background:#c8c8c8"></div>
<div style="position:absolute;left:1063px;top:724px;width:35px;height:1px;background:#bdbdbd"></div>
<div style="position:absolute;left:1063px;top:728px;width:35px;height:1px;background:#bdbdbd"></div>
<div style="position:absolute;left:551px;top:734px;line-height:20px;font-size:15.6px;color:#0e9a48;font-weight:normal;white-space:nowrap;text-align:left;"><u style="text-decoration-thickness:1px;text-underline-offset:2px;text-decoration-skip-ink:none">Свернуть</u></div>
<div style="position:absolute;left:560px;top:757px;width:1051px;height:215px;border:1px solid #a8a8a8;background:#fff"></div>
<div style="position:absolute;left:561px;top:758px;width:1049px;height:61px;background:#f2f2f2"></div>
<div style="position:absolute;left:561px;top:819px;width:1049px;height:1px;background:#cfcfcf"></div>
<div style="position:absolute;left:712px;top:758px;width:1px;height:61px;background:#d0d0d0"></div>
<div style="position:absolute;left:865px;top:758px;width:1px;height:61px;background:#d0d0d0"></div>
<div style="position:absolute;left:1017px;top:758px;width:1px;height:61px;background:#d0d0d0"></div>
<div style="position:absolute;left:1165px;top:788px;width:1px;height:31px;background:#d0d0d0"></div>
<div style="position:absolute;left:1314px;top:758px;width:1px;height:61px;background:#d0d0d0"></div>
<div style="position:absolute;left:1461px;top:788px;width:1px;height:31px;background:#d0d0d0"></div>
<div style="position:absolute;left:1017px;top:788px;width:593px;height:1px;background:#d0d0d0"></div>
<div style="position:absolute;left:561px;top:758px;width:151px;height:61px;border:1px solid #fff"></div>
<div style="position:absolute;left:713px;top:758px;width:152px;height:61px;border:1px solid #fff"></div>
<div style="position:absolute;left:866px;top:758px;width:151px;height:61px;border:1px solid #fff"></div>
<div style="position:absolute;left:1018px;top:758px;width:296px;height:30px;border:1px solid #fff"></div>
<div style="position:absolute;left:1315px;top:758px;width:295px;height:30px;border:1px solid #fff"></div>
<div style="position:absolute;left:1018px;top:789px;width:147px;height:30px;border:1px solid #fff"></div>
<div style="position:absolute;left:1166px;top:789px;width:148px;height:30px;border:1px solid #fff"></div>
<div style="position:absolute;left:1315px;top:789px;width:146px;height:30px;border:1px solid #fff"></div>
<div style="position:absolute;left:1462px;top:789px;width:148px;height:30px;border:1px solid #fff"></div>
<div style="position:absolute;left:569px;top:763px;line-height:20px;font-size:13px;color:#4d4d4d;font-weight:normal;white-space:nowrap;text-align:left;">Номенклатура</div>
<div style="position:absolute;left:721px;top:763px;line-height:20px;font-size:13px;color:#4d4d4d;font-weight:normal;white-space:nowrap;text-align:left;">Культура</div>
<div style="position:absolute;left:874px;top:763px;line-height:20px;font-size:13px;color:#4d4d4d;font-weight:normal;white-space:nowrap;text-align:left;"><span style="letter-spacing:-0.35px">Характеристика</span></div>
<div style="position:absolute;left:1026px;top:763px;line-height:20px;font-size:13px;color:#4d4d4d;font-weight:normal;white-space:nowrap;text-align:left;">После корректировки</div>
<div style="position:absolute;left:1322px;top:763px;line-height:20px;font-size:13px;color:#4d4d4d;font-weight:normal;white-space:nowrap;text-align:left;">До корректировки</div>
<div style="position:absolute;left:1026px;top:794px;line-height:20px;font-size:13px;color:#4d4d4d;font-weight:normal;white-space:nowrap;text-align:left;">Заказано</div>
<div style="position:absolute;left:1174px;top:794px;line-height:20px;font-size:13px;color:#4d4d4d;font-weight:normal;white-space:nowrap;text-align:left;">Зарезервировано</div>
<div style="position:absolute;left:1322px;top:794px;line-height:20px;font-size:13px;color:#4d4d4d;font-weight:normal;white-space:nowrap;text-align:left;">Заказано</div>
<div style="position:absolute;left:1470px;top:794px;line-height:20px;font-size:13px;color:#4d4d4d;font-weight:normal;white-space:nowrap;text-align:left;">Зарезервировано</div>
<div style="position:absolute;left:561px;top:821px;width:1049px;height:26px;background:#fef3c6"></div>
<div style="position:absolute;left:561px;top:848px;width:1049px;height:1px;background:#e6e6e6"></div>
<div style="position:absolute;left:712px;top:821px;width:1px;height:26px;background:#fff"></div>
<div style="position:absolute;left:865px;top:821px;width:1px;height:26px;background:#fff"></div>
<div style="position:absolute;left:1017px;top:821px;width:1px;height:26px;background:#fff"></div>
<div style="position:absolute;left:1165px;top:821px;width:1px;height:26px;background:#fff"></div>
<div style="position:absolute;left:1314px;top:821px;width:1px;height:26px;background:#fff"></div>
<div style="position:absolute;left:1461px;top:821px;width:1px;height:26px;background:#fff"></div>
<div style="position:absolute;left:1315px;top:821px;width:146px;height:26px;background:#fee68e"></div>
<div style="position:absolute;left:569px;top:825px;line-height:20px;font-size:13px;color:#333;font-weight:normal;white-space:nowrap;text-align:left;">Туя # западная Thuj...</div>
<div style="position:absolute;left:720px;top:825px;line-height:20px;font-size:13px;color:#333;font-weight:normal;white-space:nowrap;text-align:left;">Туя западная Thuja ...</div>
<div style="position:absolute;left:873px;top:825px;line-height:20px;font-size:13px;color:#333;font-weight:normal;white-space:nowrap;text-align:left;">Корневая система: ...</div>
<div style="position:absolute;left:1017px;top:825px;width:140px;line-height:20px;font-size:13px;color:#333;font-weight:normal;white-space:nowrap;text-align:right;">15,000</div>
<div style="position:absolute;left:1165px;top:825px;width:141px;line-height:20px;font-size:13px;color:#333;font-weight:normal;white-space:nowrap;text-align:right;">10,000</div>
<div style="position:absolute;left:1314px;top:825px;width:139px;line-height:20px;font-size:13px;color:#333;font-weight:normal;white-space:nowrap;text-align:right;">15,000</div>
<div style="position:absolute;left:1461px;top:825px;width:141px;line-height:20px;font-size:13px;color:#333;font-weight:normal;white-space:nowrap;text-align:right;">10,000</div>
<div style="position:absolute;left:561px;top:940px;width:1049px;height:1px;background:#d0d0d0"></div>
<div style="position:absolute;left:562px;top:941px;width:1047px;height:30px;background:#f2f2f2"></div>
<div style="position:absolute;left:712px;top:941px;width:1px;height:30px;background:#d8d8d8"></div>
<div style="position:absolute;left:713px;top:941px;width:1px;height:30px;background:#fff"></div>
<div style="position:absolute;left:865px;top:941px;width:1px;height:30px;background:#d8d8d8"></div>
<div style="position:absolute;left:866px;top:941px;width:1px;height:30px;background:#fff"></div>
<div style="position:absolute;left:1017px;top:941px;width:1px;height:30px;background:#d8d8d8"></div>
<div style="position:absolute;left:1018px;top:941px;width:1px;height:30px;background:#fff"></div>
<div style="position:absolute;left:1165px;top:941px;width:1px;height:30px;background:#d8d8d8"></div>
<div style="position:absolute;left:1166px;top:941px;width:1px;height:30px;background:#fff"></div>
<div style="position:absolute;left:1314px;top:941px;width:1px;height:30px;background:#d8d8d8"></div>
<div style="position:absolute;left:1315px;top:941px;width:1px;height:30px;background:#fff"></div>
<div style="position:absolute;left:1461px;top:941px;width:1px;height:30px;background:#d8d8d8"></div>
<div style="position:absolute;left:1462px;top:941px;width:1px;height:30px;background:#fff"></div>
<div style="position:absolute;left:1017px;top:946px;width:140px;line-height:20px;font-size:13px;color:#4d4d4d;font-weight:normal;white-space:nowrap;text-align:right;">15,000</div>
<div style="position:absolute;left:1165px;top:946px;width:141px;line-height:20px;font-size:13px;color:#4d4d4d;font-weight:normal;white-space:nowrap;text-align:right;">10,000</div>
<div style="position:absolute;left:1314px;top:946px;width:139px;line-height:20px;font-size:13px;color:#4d4d4d;font-weight:normal;white-space:nowrap;text-align:right;">15,000</div>
<div style="position:absolute;left:1461px;top:946px;width:141px;line-height:20px;font-size:13px;color:#4d4d4d;font-weight:normal;white-space:nowrap;text-align:right;">10,000</div>
<div style="position:absolute;left:300px;top:980px;line-height:20px;font-size:13px;color:#8a0c26;font-weight:normal;white-space:nowrap;text-align:left;">Туя # западная Thuja occidentalis Golden Globe CUT</div>
<svg style="position:absolute;left:1628px;top:112px" width="12" height="892" viewBox="0 0 12 892"><path d="M2.5 8 l3.5 -4 l3.5 4z" fill="#c8c8c8"/><rect x="2" y="18" width="8" height="855" rx="4" fill="#d4d4d4"/><rect x="2" y="18" width="8" height="442" rx="4" fill="#999"/><path d="M2.5 884 l3.5 4 l3.5 -4z" fill="#aaa"/></svg>
<div style="position:absolute;left:332px;top:1047px;width:784px;height:251px;border:1px solid #a3a3a3;background:#fff"></div>
<svg style="position:absolute;left:347px;top:1059px" width="20" height="18" viewBox="0 0 20 18"><path d="M10 1.5 L12.3 6.9 L18.2 7.2 L13.6 11 L15.2 16.7 L10 13.6 L4.8 16.7 L6.4 11 L1.8 7.2 L7.7 6.9 Z" fill="none" stroke="#b9bec4" stroke-width="1.1"/></svg>
<div style="position:absolute;left:377px;top:1059px;line-height:20px;font-size:18.5px;color:#000;font-weight:normal;white-space:nowrap;text-align:left;">Укажите количество</div>
<svg style="position:absolute;left:989px;top:1056px" width="120" height="24" viewBox="0 0 120 24">
<g fill="none" stroke="#555" stroke-width="1.2" transform="rotate(-45 12.5 12)">
<path d="M10.5 8.6 h-3.6 a3.4 3.4 0 0 0 0 6.8 h2.2"/>
<path d="M14.5 15.4 h3.6 a3.4 3.4 0 0 0 0 -6.8 h-2.2"/>
<path d="M9.5 12 h6"/>
</g>
<g fill="#777"><circle cx="44.5" cy="8.3" r="1.4"/><circle cx="44.5" cy="12.5" r="1.4"/><circle cx="44.5" cy="16.7" r="1.4"/></g>
<rect x="71.5" y="8.5" width="8" height="8" fill="none" stroke="#222" stroke-width="1.2"/>
<path d="M101.5 7.5 l9.5 9.5 M111 7.5 l-9.5 9.5" stroke="#333" stroke-width="1.2"/>
</svg>
<div class="ybtn" style="left:345px;top:1091px;width:46px;height:26px;"></div>
<div style="position:absolute;left:345px;top:1095px;width:46px;line-height:20px;font-size:13px;color:#222;font-weight:normal;white-space:nowrap;text-align:center;-webkit-text-stroke:0.25px #222">OK</div>
<div class="btn" style="left:400px;top:1091px;width:93px;height:26px;"></div>
<svg style="position:absolute;left:408px;top:1097px" width="14" height="14" viewBox="0 0 14 14"><path d="M2.5 2.5 l8.5 8.5 M11 2.5 l-8.5 8.5" stroke="#333" stroke-width="2"/></svg>
<div style="position:absolute;left:430px;top:1095px;line-height:20px;font-size:13px;color:#4d4d4d;font-weight:normal;white-space:nowrap;text-align:left;">Закрыть</div>
<div style="position:absolute;left:345px;top:1130px;line-height:20px;font-size:13px;color:#4d4d4d;font-weight:normal;white-space:nowrap;text-align:left;">Культура:</div>
<div class="fld" style="left:446px;top:1127px;width:258px;height:25px;overflow:hidden"></div>
<div style="position:absolute;left:682px;top:1128px;width:1px;height:23px;background:#c8c8c8"></div>
<svg style="position:absolute;left:688px;top:1134px" width="11" height="11" viewBox="0 0 11 11"><path d="M1 4 v5.5 h5.5" fill="none" stroke="#333" stroke-width="1.1"/><rect x="3.5" y="1.5" width="6" height="5.5" fill="none" stroke="#333" stroke-width="1.1"/></svg>
<div style="position:absolute;left:450px;top:1130px;line-height:20px;font-size:13px;color:#333;font-weight:bold;white-space:nowrap;text-align:left;width:231px;overflow:hidden;letter-spacing:0.2px">Туя западная Thuja occidentalis Golden Globe</div>
<div style="position:absolute;left:345px;top:1164px;line-height:20px;font-size:13px;color:#4d4d4d;font-weight:normal;white-space:nowrap;text-align:left;"><span style="letter-spacing:-0.35px">Характеристика:</span></div>
<div class="fld" style="left:446px;top:1161px;width:258px;height:25px;overflow:hidden"></div>
<div style="position:absolute;left:682px;top:1162px;width:1px;height:23px;background:#c8c8c8"></div>
<svg style="position:absolute;left:688px;top:1168px" width="11" height="11" viewBox="0 0 11 11"><path d="M1 4 v5.5 h5.5" fill="none" stroke="#333" stroke-width="1.1"/><rect x="3.5" y="1.5" width="6" height="5.5" fill="none" stroke="#333" stroke-width="1.1"/></svg>
<div style="position:absolute;left:450px;top:1164px;line-height:20px;font-size:13px;color:#333;font-weight:bold;white-space:nowrap;text-align:left;width:231px;overflow:hidden;letter-spacing:0.2px">Корневая система: CUT</div>
<div style="position:absolute;left:345px;top:1198px;line-height:20px;font-size:13px;color:#4d4d4d;font-weight:normal;white-space:nowrap;text-align:left;">Номенклатура:</div>
<div class="fld" style="left:446px;top:1195px;width:258px;height:25px;overflow:hidden"></div>
<div style="position:absolute;left:682px;top:1196px;width:1px;height:23px;background:#c8c8c8"></div>
<svg style="position:absolute;left:688px;top:1202px" width="11" height="11" viewBox="0 0 11 11"><path d="M1 4 v5.5 h5.5" fill="none" stroke="#333" stroke-width="1.1"/><rect x="3.5" y="1.5" width="6" height="5.5" fill="none" stroke="#333" stroke-width="1.1"/></svg>
<div style="position:absolute;left:450px;top:1198px;line-height:20px;font-size:13px;color:#333;font-weight:normal;white-space:nowrap;text-align:left;width:231px;overflow:hidden;">Туя # западная Thuja occidentalis Golden Globe CUT</div>
<div style="position:absolute;left:345px;top:1234px;line-height:20px;font-size:13px;color:#4d4d4d;font-weight:normal;white-space:nowrap;text-align:left;">В корзине:</div>
<div style="position:absolute;left:443px;top:1226px;width:186px;height:35px;border:2px solid #f6c000;background:#fff"></div>
<div style="position:absolute;left:440px;top:1234px;width:140px;line-height:20px;font-size:16px;color:#b01e1e;font-weight:bold;white-space:nowrap;text-align:right;">4,00</div>
<div style="position:absolute;left:558px;top:1234px;width:1px;height:20px;background:#111"></div>
<div style="position:absolute;left:583px;top:1230px;width:1px;height:27px;background:#999"></div>
<div style="position:absolute;left:604px;top:1230px;width:1px;height:27px;background:#999"></div>
<svg style="position:absolute;left:575px;top:1222px" width="100" height="43" viewBox="0 0 100 43">
<rect x="14.6" y="16.6" width="8.3" height="10.3" rx="0.8" fill="none" stroke="#444" stroke-width="1.1"/>
<rect x="15" y="18.2" width="7.6" height="1" fill="#444"/>
<g fill="#444"><rect x="16.3" y="20.6" width="1.1" height="1.1"/><rect x="18.3" y="20.6" width="1.1" height="1.1"/><rect x="20.3" y="20.6" width="1.1" height="1.1"/>
<rect x="16.3" y="22.6" width="1.1" height="1.1"/><rect x="18.3" y="22.6" width="1.1" height="1.1"/><rect x="20.3" y="22.6" width="1.1" height="2.8"/>
<rect x="16.3" y="24.4" width="1.1" height="1.1"/><rect x="18.3" y="24.4" width="1.1" height="1.1"/></g>
<path d="M38 16.6 L41.5 16.6 L39.75 14.3Z M38 28 L41.5 28 L39.75 30.3Z" fill="#444"/>
<rect x="30" y="21" width="20" height="1" fill="#a0a0a0"/>
</svg>
<div class="btn" style="left:636px;top:1230px;width:30px;height:26px;"></div>
<svg style="position:absolute;left:575px;top:1222px" width="100" height="43" viewBox="0 0 100 43"><path d="M76 17 v8.4 M71.8 21.2 h8.4" stroke="#2f9a12" stroke-width="2.4"/></svg>
<div style="position:absolute;left:708px;top:1127px;width:1px;height:66px;background:repeating-linear-gradient(#ccc 0 3px,transparent 3px 6px)"></div>
<div style="position:absolute;left:714px;top:1130px;line-height:20px;font-size:13px;color:#4d4d4d;font-weight:normal;white-space:nowrap;text-align:left;">Участок:</div>
<div class="fld" style="left:785px;top:1127px;width:311px;height:25px;overflow:hidden"></div>
<div style="position:absolute;left:1074px;top:1128px;width:1px;height:23px;background:#c8c8c8"></div>
<svg style="position:absolute;left:1080px;top:1134px" width="11" height="11" viewBox="0 0 11 11"><path d="M1 4 v5.5 h5.5" fill="none" stroke="#333" stroke-width="1.1"/><rect x="3.5" y="1.5" width="6" height="5.5" fill="none" stroke="#333" stroke-width="1.1"/></svg>
<div style="position:absolute;left:789px;top:1130px;line-height:20px;font-size:13px;color:#333;font-weight:normal;white-space:nowrap;text-align:left;width:284px;overflow:hidden;">Теплица / Спэн 2 / Ряд 8</div>
<div style="position:absolute;left:714px;top:1164px;line-height:20px;font-size:13px;color:#4d4d4d;font-weight:normal;white-space:nowrap;text-align:left;">Посадка:</div>
<div class="fld" style="left:785px;top:1161px;width:311px;height:25px;overflow:hidden"></div>
<div style="position:absolute;left:1074px;top:1162px;width:1px;height:23px;background:#c8c8c8"></div>
<svg style="position:absolute;left:1080px;top:1168px" width="11" height="11" viewBox="0 0 11 11"><path d="M1 4 v5.5 h5.5" fill="none" stroke="#333" stroke-width="1.1"/><rect x="3.5" y="1.5" width="6" height="5.5" fill="none" stroke="#333" stroke-width="1.1"/></svg>
<div style="position:absolute;left:789px;top:1164px;line-height:20px;font-size:13px;color:#333;font-weight:normal;white-space:nowrap;text-align:left;width:284px;overflow:hidden;">Посадка № 00000000003 от 23.10.2020</div>
<div style="position:absolute;left:708px;top:1191px;width:356px;height:67px;border:3px solid #7b7bf7;border-radius:7px"></div>
<div style="position:absolute;left:714px;top:1198px;line-height:20px;font-size:13px;color:#4d4d4d;font-weight:normal;white-space:nowrap;text-align:left;">В наличии:</div>
<div class="fld" style="left:785px;top:1195px;width:131px;height:25px"></div>
<div style="position:absolute;left:785px;top:1198px;width:127px;line-height:20px;font-size:13px;color:#333;font-weight:normal;white-space:nowrap;text-align:right;">25,00</div>
<div style="position:absolute;left:926px;top:1198px;line-height:20px;font-size:13px;color:#4d4d4d;font-weight:normal;white-space:nowrap;text-align:left;">Резерв:</div>
<div class="fld" style="left:977px;top:1195px;width:81px;height:25px"></div>
<div style="position:absolute;left:977px;top:1198px;width:77px;line-height:20px;font-size:13px;color:#333;font-weight:normal;white-space:nowrap;text-align:right;">21,00</div>
<div style="position:absolute;left:714px;top:1232px;line-height:20px;font-size:13px;color:#4d4d4d;font-weight:normal;white-space:nowrap;text-align:left;">Доступно:</div>
<div class="fld" style="left:785px;top:1229px;width:131px;height:25px"></div>
<div style="position:absolute;left:785px;top:1232px;width:127px;line-height:20px;font-size:13px;color:#333;font-weight:normal;white-space:nowrap;text-align:right;">4,00</div>
<div class="ann" style="left:314px;top:6px"><span style="letter-spacing:-0.049px">Документ, выбранный в окне дефицита,</span><br><span style="letter-spacing:-0.018px">в котором изменяем резерв культуры.</span></div>
<div class="ann" style="left:609px;top:6px"><span style="letter-spacing:0.016px">Культура, выбранная в окне</span><br><span style="letter-spacing:-0.142px">дефицита, резерв которой изменяем.</span></div>
<div class="ann" style="left:9px;top:335px"><span style="letter-spacing:-0.11px">В таблице отображаются растения</span><br><span style="letter-spacing:-0.083px">культуры, выбранной в окне дефицита,</span><br><span style="letter-spacing:-0.074px">с разными характеристиками и</span><br>посаженная на разных участках.<br>&nbsp;<br><span style="letter-spacing:0.014px">С помощью этих растений можно</span><br><span style="letter-spacing:-0.043px">скорректировать резерв этой культуры</span><br>в заказе.</div>
<div class="ann" style="left:9px;top:596px"><span style="letter-spacing:-0.212px">Жирным шрифтом отображается</span><br><span style="letter-spacing:-0.032px">растение в документе и его</span><br><span style="letter-spacing:-0.047px">количество: остаток, зарезервировано,</span><br><span style="letter-spacing:-0.073px">доступно. "В корзине" — это</span><br><span style="letter-spacing:-0.429px">количество растения в документе.</span></div>
<div class="ann" style="left:10px;top:701px">1. Выберите курсором растение,<br><span style="letter-spacing:-0.093px">некоторое количество которого</span><br><span style="letter-spacing:0.058px">вы хотите добавить в документ, и</span><br><span style="letter-spacing:0.125px">дважды щелкните по нему мышью</span><br><span style="letter-spacing:-0.025px">или нажмите на нем Enter.</span></div>
<div class="ann" style="left:10px;top:823px"><span style="letter-spacing:-0.086px">В корзине отображается</span><br><span style="letter-spacing:-0.097px">заказанное и зарезервированное</span><br><span style="letter-spacing:-0.052px">количество растения в документе.</span></div>
<div class="ann" style="left:30px;top:1099px">3. Нажмите <b><i>ОК</i></b>.</div>
<div class="ann" style="left:30px;top:1262px"><span style="letter-spacing:0.071px">2. В поле "В корзине" введите</span><br><span style="letter-spacing:-0.089px">количество растения.</span></div>
<div class="ann" style="left:671px;top:1330px"><span style="letter-spacing:-0.053px">Обратите внимание сколько этого растения в наличии, сколько</span><br>зарезервировано и сколько доступно. Не вводите больше, чем доступно.</div>
<svg style="position:absolute;left:0;top:0" width="1642" height="1367" viewBox="0 0 1642 1367">
<g stroke="#222" stroke-width="1.2" fill="none">
<path d="M401 38.5 L409.5 78"/>
<path d="M515.5 37 L624 108.5"/>
<path d="M686.5 41 L674.7 108.5"/>
<path d="M229 383.5 L533.7 383.5"/>
<path d="M551.5 247.5 Q519.5 433 551.5 618.5"/>
<path d="M246 608.5 L551 608.5"/>
<path d="M211 719 L586.6 621"/>
<path d="M213 833 L558.5 833"/>
<path d="M136.6 1105.5 L342.6 1105.5"/>
<path d="M218.4 1283.2 L443 1253.2"/>
<path d="M867.6 1261.7 L857.1 1328.5"/>
</g>
<path d="M643 619 L625.8 1029" stroke="#f00" stroke-width="2"/>
<path d="M621.6 1027.6 L625.6 1030.6 L629.8 1027.6 L625.3 1047.6 Z" fill="#f00"/>
</svg>
</body></html>
